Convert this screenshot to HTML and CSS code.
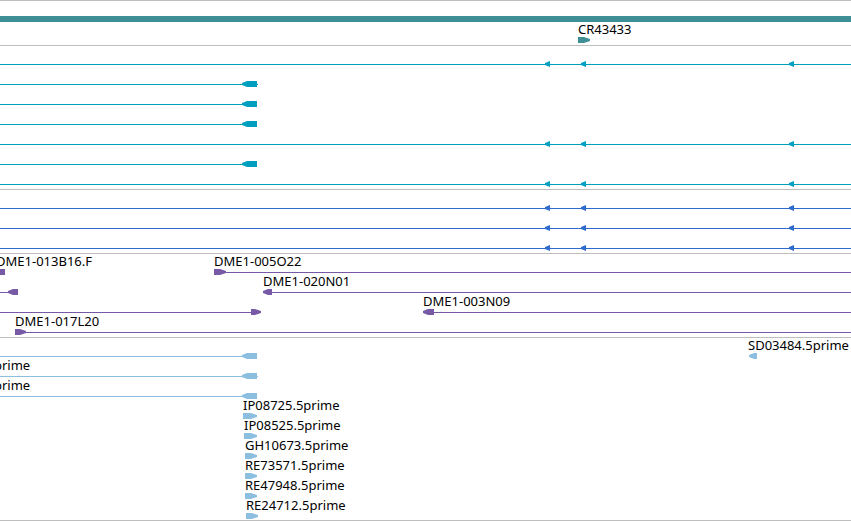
FILE: index.html
```html
<!DOCTYPE html>
<html lang="en">
<head>
  <meta charset="UTF-8" />
  <meta name="viewport" content="width=device-width, initial-scale=1.0" />
  <title>Genome tracks</title>
  <link rel="stylesheet" href="styles.css">
</head>
<body>
  <main class="browser">

    <!-- genes -->
    <section class="track genes">
      <div class="lane">
        <span class="gene-bar"></span>
      </div>
      <div class="lane">
        <span class="label" style="left: 578px">CR43433</span>
        <span class="exon forward" style="left: 578px; width: 12px"></span>
      </div>
    </section>

    <!-- transcripts -->
    <section class="track transcripts">
      <div class="lane">
        <span class="intron" style="left: 0; right: 0"></span>
        <span class="arrow" style="left: 545px"></span>
        <span class="arrow" style="left: 581px"></span>
        <span class="arrow" style="left: 789px"></span>
      </div>
      <div class="lane">
        <span class="intron" style="left: 0; width: 258px"></span>
        <span class="exon reverse" style="left: 242px; width: 15px"></span>
      </div>
      <div class="lane">
        <span class="intron" style="left: 0; width: 257px"></span>
        <span class="exon reverse" style="left: 242px; width: 15px"></span>
      </div>
      <div class="lane">
        <span class="intron" style="left: 0; width: 257px"></span>
        <span class="exon reverse" style="left: 242px; width: 15px"></span>
      </div>
      <div class="lane">
        <span class="intron" style="left: 0; right: 0"></span>
        <span class="arrow" style="left: 545px"></span>
        <span class="arrow" style="left: 581px"></span>
        <span class="arrow" style="left: 789px"></span>
      </div>
      <div class="lane">
        <span class="intron" style="left: 0; width: 257px"></span>
        <span class="exon reverse" style="left: 242px; width: 15px"></span>
      </div>
      <div class="lane">
        <span class="intron" style="left: 0; right: 0"></span>
        <span class="arrow" style="left: 545px"></span>
        <span class="arrow" style="left: 581px"></span>
        <span class="arrow" style="left: 789px"></span>
      </div>
    </section>

    <!-- coding sequences -->
    <section class="track cds">
      <div class="lane">
        <span class="intron" style="left: 0; right: 0"></span>
        <span class="arrow" style="left: 545px"></span>
        <span class="arrow" style="left: 581px"></span>
        <span class="arrow" style="left: 789px"></span>
      </div>
      <div class="lane">
        <span class="intron" style="left: 0; right: 0"></span>
        <span class="arrow" style="left: 545px"></span>
        <span class="arrow" style="left: 581px"></span>
        <span class="arrow" style="left: 789px"></span>
      </div>
      <div class="lane">
        <span class="intron" style="left: 0; right: 0"></span>
        <span class="arrow" style="left: 545px"></span>
        <span class="arrow" style="left: 581px"></span>
        <span class="arrow" style="left: 789px"></span>
      </div>
    </section>

    <!-- clone ends -->
    <section class="track clones">
      <div class="lane">
        <span class="label" style="left: -4px">DME1-013B16.F</span>
        <span class="exon" style="left: 0; width: 5px"></span>
        <span class="label" style="left: 214px">DME1-005O22</span>
        <span class="exon forward" style="left: 214px; width: 12px"></span>
        <span class="intron" style="left: 220px; right: 0"></span>
      </div>
      <div class="lane">
        <span class="intron" style="left: 0; width: 12px"></span>
        <span class="exon reverse" style="left: 8px; width: 10px"></span>
        <span class="label" style="left: 263px">DME1-020N01</span>
        <span class="exon reverse" style="left: 263px; width: 9px"></span>
        <span class="intron" style="left: 268px; right: 0"></span>
      </div>
      <div class="lane">
        <span class="intron" style="left: 0; width: 255px"></span>
        <span class="exon forward" style="left: 251px; width: 10px"></span>
        <span class="label" style="left: 423px">DME1-003N09</span>
        <span class="exon reverse" style="left: 423px; width: 11px"></span>
        <span class="intron" style="left: 428px; right: 0"></span>
      </div>
      <div class="lane">
        <span class="label" style="left: 15px">DME1-017L20</span>
        <span class="exon forward" style="left: 15px; width: 11px"></span>
        <span class="intron" style="left: 20px; right: 0"></span>
      </div>
    </section>

    <!-- ESTs -->
    <section class="track ests">
      <div class="lane">
        <span class="intron" style="left: 0; width: 257px"></span>
        <span class="exon reverse" style="left: 242px; width: 15px"></span>
        <span class="label" style="left: 748px">SD03484.5prime</span>
        <span class="exon reverse" style="left: 749px; width: 8px"></span>
      </div>
      <div class="lane">
        <span class="label" style="left: -6px">prime</span>
        <span class="intron" style="left: 0; width: 258px"></span>
        <span class="exon reverse" style="left: 242px; width: 15px"></span>
      </div>
      <div class="lane">
        <span class="label" style="left: -6px">prime</span>
        <span class="intron" style="left: 0; width: 257px"></span>
        <span class="exon reverse" style="left: 242px; width: 15px"></span>
      </div>
      <div class="lane">
        <span class="label" style="left: 243px">IP08725.5prime</span>
        <span class="exon forward" style="left: 243px; width: 14px"></span>
      </div>
      <div class="lane">
        <span class="label" style="left: 244px">IP08525.5prime</span>
        <span class="exon forward" style="left: 244px; width: 13px"></span>
      </div>
      <div class="lane">
        <span class="label" style="left: 245px">GH10673.5prime</span>
        <span class="exon forward" style="left: 245px; width: 12px"></span>
      </div>
      <div class="lane">
        <span class="label" style="left: 245px">RE73571.5prime</span>
        <span class="exon forward" style="left: 245px; width: 12px"></span>
      </div>
      <div class="lane">
        <span class="label" style="left: 245px">RE47948.5prime</span>
        <span class="exon forward" style="left: 245px; width: 12px"></span>
      </div>
      <div class="lane">
        <span class="label" style="left: 246px">RE24712.5prime</span>
        <span class="exon forward" style="left: 246px; width: 12px"></span>
      </div>
    </section>

  </main>
</body>
</html>
```
FILE: styles.css
```css
body {
  margin: 0;
  font-family: "Noto Sans", sans-serif;
  font-size: 13px;
  background-color: #fff;
  color: #000;
}

.browser {
  overflow: hidden;
  border-bottom: 1px solid #bebebe;
}

.track {
  display: flex;
  flex-direction: column;
  gap: 1px;
  padding: 3px 0 1px;
  border-top: 1px solid #bebebe;
}

.track:last-child {
  padding-bottom: 0;
}

.lane {
  position: relative;
  height: 19px;
}

/* one colour per track, the shapes pick it up */
.genes {
  --color: #3f8f96;
  gap: 2px;
}

.transcripts {
  --color: #009fbf;
}

.cds {
  --color: #2f6bcd;
}

.clones {
  --color: #7759a6;
}

.ests {
  --color: #8bbedf;
}

/* features sit at their sequence position on the lane */
.label, .gene-bar, .intron, .exon, .arrow {
  position: absolute;
}

.label {
  top: 0;
  line-height: 8px;
  white-space: nowrap;
}

.gene-bar, .intron, .exon, .arrow {
  background-color: var(--color);
}

.gene-bar, .exon, .arrow {
  top: 12px;
  height: 6px;
}

.gene-bar {
  left: 0;
  right: 0;
}

.intron {
  top: 15px;
  height: 1px;
}

.forward {
  clip-path: polygon(0 0, calc(100% - 6px) 0, 100% 35%, 100% 65%, calc(100% - 6px) 100%, 0 100%);
}

.reverse {
  clip-path: polygon(100% 0, 5px 0, 0 35%, 0 65%, 5px 100%, 100% 100%);
}

.arrow {
  width: 5px;
  clip-path: polygon(100% 0, 0 35%, 0 65%, 100% 100%);
}
```
